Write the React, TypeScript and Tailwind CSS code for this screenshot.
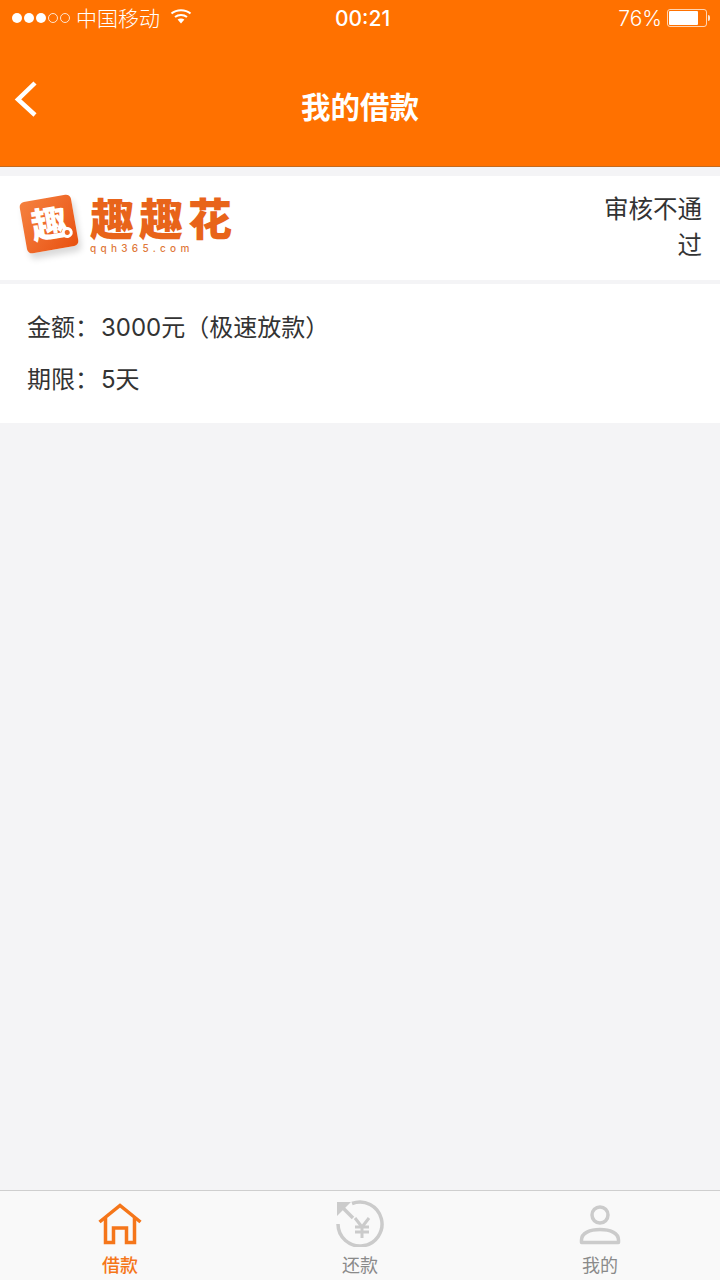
import React from 'react';

const cjk = {fontFamily: '"Inter", "Noto Sans CJK SC", sans-serif'};

function WifiIcon() {
  return (
    <svg width="22" height="16" viewBox="0 0 22 16" fill="none" stroke="#fff" strokeLinecap="butt">
      <path d="M1.5 5.5C6.6 1 15.4 1 20.5 5.5" strokeWidth="2" />
      <path d="M5 9C8.4 6.2 13.6 6.2 17 9" strokeWidth="2" />
      <path d="M11 15.5L7.6 11.6C9.5 10.2 12.5 10.2 14.4 11.6Z" fill="#fff" stroke="none" />
    </svg>
  );
}

function StatusBar() {
  return (
    <div className="relative flex h-[36px] items-center justify-between pl-[12px] pr-[10px] text-white">
      <div className="flex items-center">
        <div className="flex items-center gap-[2px]">
          <span className="h-[10px] w-[10px] rounded-full bg-white" />
          <span className="h-[10px] w-[10px] rounded-full bg-white" />
          <span className="h-[10px] w-[10px] rounded-full bg-white" />
          <span className="h-[10px] w-[10px] rounded-full border border-white/80" />
          <span className="h-[10px] w-[10px] rounded-full border border-white/80" />
        </div>
        <span className="ml-[6px] text-[21px] leading-[37px] font-light">中国移动</span>
        <span className="ml-[10px] -mt-[5px]"><WifiIcon /></span>
      </div>
      <span className="absolute left-[335px] top-0 text-[21px] leading-[37px] font-medium">00:21</span>
      <div className="flex items-center">
        <span className="text-[21px] leading-[37px] font-light">76%</span>
        <div className="ml-[5px] flex items-center">
          <div className="h-[18px] w-[40px] rounded-[3px] border border-white/70 p-[1px]">
            <div className="h-full w-[29px] rounded-[1px] bg-white" />
          </div>
          <div className="ml-[1px] h-[6px] w-[2px] rounded-r-full bg-white/80" />
        </div>
      </div>
    </div>
  );
}

function Header() {
  return (
    <div className="h-[167px] border-b border-[#c46a1e] bg-[#ff7100]">
      <StatusBar />
      <div className="relative flex h-[130px] justify-center">
        <span className="mt-[52px] text-[29.5px] leading-[38px] font-semibold text-white">我的借款</span>
        <svg className="absolute left-[14px] top-[44px]" width="24" height="38" viewBox="0 0 24 38" fill="none">
          <path d="M21 3L4 19.5L21 35" stroke="#fff" strokeWidth="4.5" />
        </svg>
      </div>
    </div>
  );
}

function Logo() {
  return (
    <div className="flex items-center pb-[7px]">
      <div className="relative flex h-[52px] w-[52px] -translate-y-[1px] -rotate-[10deg] items-center justify-center rounded-[5px] bg-gradient-to-br from-[#f5813e] to-[#e8500c] shadow-[2px_6px_6px_rgba(0,0,0,0.15)]">
        <span className="text-[36px] leading-none font-black text-white">趣</span>
        <span className="absolute bottom-[9px] right-[4px] h-[11px] w-[11px] rounded-full border-[3px] border-white bg-[#ef6a24]" />
      </div>
      <div className="ml-[15px] flex flex-col items-start">
        <span className="mt-[2px] text-[44px] leading-[44px] font-black tracking-[5px] text-[#e8641a]">趣趣花</span>
        <span className="text-[10px] leading-[12px] font-medium tracking-[4.3px] text-[#e0793a]">qqh365.com</span>
      </div>
    </div>
  );
}

function TabItem({icon, label, active}: {icon: React.ReactNode; label: string; active?: boolean}) {
  return (
    <div className="flex flex-1 flex-col items-center">
      <div className="flex h-[54px] items-end">{icon}</div>
      <span className={`mt-[9px] text-[18px] leading-[24px] ${active ? 'font-medium text-[#f5761a]' : 'text-[#8a8a8a]'}`}>{label}</span>
    </div>
  );
}

export default function App() {
  return (
    <div className="flex h-[1280px] w-[720px] flex-col overflow-hidden bg-[#f4f4f6]" style={cjk}>
      <Header />

      {/* Loan card */}
      <div className="mt-[9px] flex h-[104px] justify-between bg-white pl-[23px] pr-[18px]">
        <Logo />
        <div className="w-[100px] pt-[15px] text-right text-[24.5px] leading-[36px] text-[#333]">审核不通过</div>
      </div>
      <div className="mt-[4px] h-[139px] bg-white px-[27px] pt-[18px] text-[24px] leading-[52px] text-[#333]">
        <div>金额：<span className="ml-[2px]">3000元（极速放款）</span></div>
        <div>期限：<span className="ml-[2px]">5天</span></div>
      </div>

      <div className="flex-1" />

      {/* Tab bar */}
      <div className="flex h-[90px] border-t border-[#cfcfcf] bg-[#f9f9f9]">
        <TabItem
          active
          label="借款"
          icon={
            <svg width="44" height="42" viewBox="0 0 44 42" fill="none" stroke="#f5761a" strokeWidth="3.5">
              <path d="M1.5 19L22 2.5L42.5 19" />
              <path d="M7.5 15V39.5H15.5V25H28.5V39.5H36.5V15" />
            </svg>
          }
        />
        <TabItem
          label="还款"
          icon={
            <svg className="-mb-[2px]" width="48" height="48" viewBox="0 0 48 48" fill="none" stroke="#cbcbcb" strokeWidth="3.5">
              <path d="M16 4.5A22 22 0 1 1 2 25" />
              <path d="M1 3H15L1 17Z" fill="#cbcbcb" stroke="none" />
              <path d="M7 9L17 19" />
              <path d="M19 19L26 28L33 19M19 28H33M19 33H33M26 28V39" strokeWidth="3" />
            </svg>
          }
        />
        <TabItem
          label="我的"
          icon={
            <svg width="42" height="42" viewBox="0 0 42 42" fill="none" stroke="#cbcbcb" strokeWidth="3.5">
              <circle cx="21" cy="12" r="8" />
              <path d="M2.5 39.5V37C2.5 30 11 26.5 21 26.5S39.5 30 39.5 37V39.5Z" strokeLinejoin="round" />
            </svg>
          }
        />
      </div>
    </div>
  );
}
